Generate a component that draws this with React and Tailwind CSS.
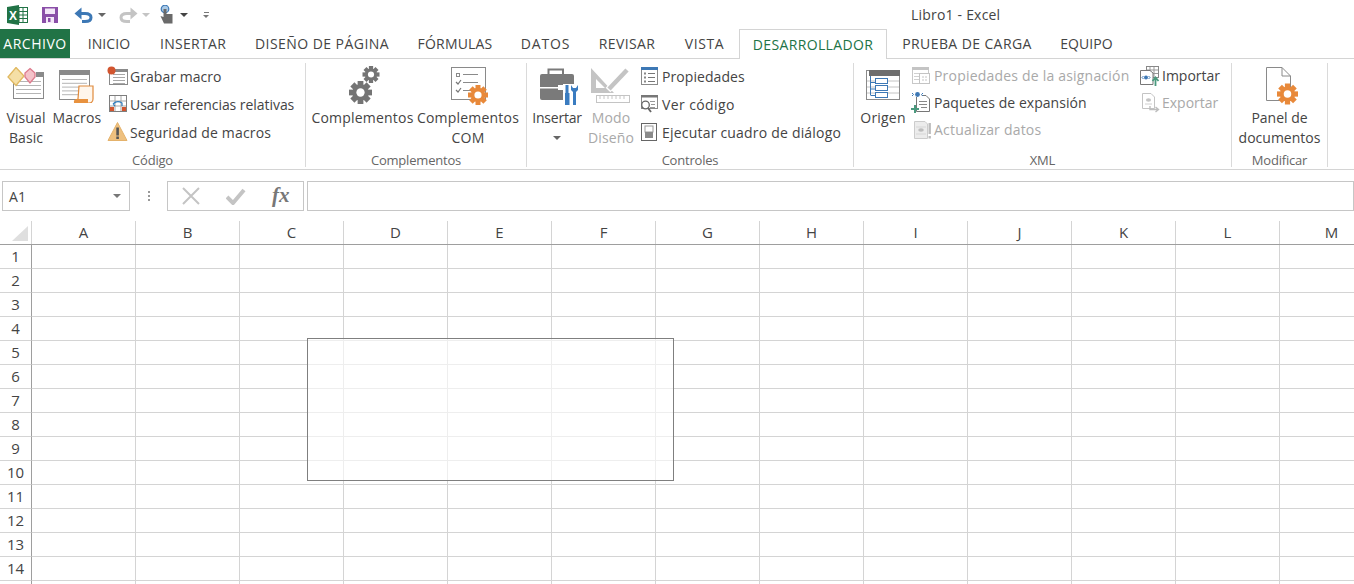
import React from 'react';

const TABS = [
  ['INICIO', 'w-[72px] tracking-[0.1px]'],
  ['INSERTAR', 'w-[96px] tracking-[0.3px]'],
  ['DISEÑO DE PÁGINA', 'w-[162px] tracking-[0.45px]'],
  ['FÓRMULAS', 'w-[104px] tracking-[0.17px]'],
  ['DATOS', 'w-[77px] tracking-[0.8px]'],
  ['REVISAR', 'w-[86px] tracking-[0.4px]'],
  ['VISTA', 'w-[69px] tracking-[0.6px]'],
];
const TABS_AFTER = [
  ['PRUEBA DE CARGA', 'w-[158px] tracking-[0.4px]'],
  ['EQUIPO', 'w-[81px] tracking-[0.1px]'],
];
const COLUMNS = ['A', 'B', 'C', 'D', 'E', 'F', 'G', 'H', 'I', 'J', 'K', 'L', 'M'];
const ROWS = [1, 2, 3, 4, 5, 6, 7, 8, 9, 10, 11, 12, 13, 14, 15];

const Gear = ({ cx, cy, r, color }) => (
  <g fill={color}>
    {[0, 45, 90, 135].map((a) => (
      <rect key={a} x={cx - r * 0.25} y={cy - r} width={r * 0.5} height={r * 2} transform={`rotate(${a} ${cx} ${cy})`} />
    ))}
    <circle cx={cx} cy={cy} r={r * 0.72} />
    <circle cx={cx} cy={cy} r={r * 0.36} fill="#fff" />
  </g>
);

const Lines = ({ x, y, w, n, step, color = '#9a9a9a' }) => (
  <g stroke={color} strokeWidth="1">
    {Array.from({ length: n }).map((_, i) => (
      <line key={i} x1={x} x2={x + w} y1={y + i * step + 0.5} y2={y + i * step + 0.5} />
    ))}
  </g>
);

const Table = ({ x, y, w, h, color = '#8a8a8a', rows = 4 }) => (
  <g>
    <rect x={x + 0.5} y={y + 0.5} width={w - 1} height={h - 1} fill="#fff" stroke={color} />
    <rect x={x} y={y} width={w} height={5} fill={color} />
    <Lines x={x + 3} y={y + 9} w={w - 6} n={rows} step={(h - 11) / rows} color="#b5b5b5" />
  </g>
);

const VisualBasicIcon = () => (
  <svg width="38" height="36" viewBox="0 0 38 36" className="block">
    <Table x={6} y={5} w={31} h={27} />
    <rect x={5} y={4} width={24} height={7} fill="#fff" />
    <path d="M9 0.5 L17 9 L9 18.5 L1 10 Z" fill="#f5dfa6" stroke="#e0b860" strokeWidth="1.3" />
    <path d="M23 1.5 L28 6 L28 10 L23 16 L18 10 L18 6 Z" fill="#f4c2c9" stroke="#dd7b8d" strokeWidth="1.3" />
  </svg>
);

const MacrosIcon = () => (
  <svg width="38" height="36" viewBox="0 0 38 36" className="block">
    <Table x={1} y={3} w={31} h={30} rows={5} />
    <path d="M21 19 H35 V32 Q35 36 31 36 H18 Q16 33 20 32 Z" fill="#fff6ec" stroke="#e08a3c" strokeWidth="1.2" />
    <path d="M16 36 Q15 32 20 32 H30 V36 Z" fill="#e8923f" />
  </svg>
);

const RecordIcon = () => (
  <svg width="21" height="20" viewBox="0 0 21 20" className="block">
    <rect x="2.5" y="3.5" width="18" height="15" fill="#fff" stroke="#8a8a8a" />
    <rect x="2" y="3" width="19" height="3" fill="#8a8a8a" />
    <Lines x={6} y={8} w={12} n={4} step={3} color="#a8a8a8" />
    <circle cx="4.5" cy="4.5" r="4" fill="#d2552f" />
  </svg>
);

const RelativeIcon = () => (
  <svg width="21" height="20" viewBox="0 0 21 20" className="block">
    <rect x="2.5" y="1.5" width="17" height="16" fill="#fff" stroke="#7e7e7e" />
    <path d="M8 2V17M14 2V17M3 7H19M3 12H19" stroke="#a8a8a8" />
    <path d="M6 10 Q10 6 15 9 L15 12 M6 10 L9 8 M6 10 L8 12" fill="none" stroke="#2f7dbe" strokeWidth="1.2" />
    <rect x="3" y="13" width="4" height="4" fill="#d2552f" />
    <rect x="15" y="13" width="4" height="4" fill="#d2552f" />
  </svg>
);

const WarningIcon = () => (
  <svg width="21" height="20" viewBox="0 0 21 20" className="block">
    <path d="M10.5 0.5 L20 18.5 H1 Z" fill="#eec07f" stroke="#e4b26b" strokeLinejoin="round" />
    <rect x="9.3" y="5.5" width="2.6" height="8" fill="#555" />
    <rect x="9.3" y="14.5" width="2.6" height="2.5" fill="#555" />
  </svg>
);

const AddInsIcon = () => (
  <svg width="34" height="40" viewBox="0 0 34 40" className="block">
    <Gear cx={14.5} cy={27.5} r={11.5} color="#747474" />
    <Gear cx={25} cy={9.5} r={8.5} color="#747474" />
  </svg>
);

const ComIcon = () => (
  <svg width="42" height="40" viewBox="0 0 42 40" className="block">
    <rect x="4.5" y="2.5" width="34" height="32" fill="#fff" stroke="#8a8a8a" />
    <rect x="9.5" y="8.5" width="3" height="3" fill="none" stroke="#8a8a8a" />
    <path d="M16 9.5H31M16 17.5H31M16 25.5H25" stroke="#8a8a8a" />
    <path d="M9 17 L11 19 L14 15M9 25 L11 27 L14 23" fill="none" stroke="#777" strokeWidth="1.2" />
    <Gear cx={31} cy={30} r={10} color="#e8893a" />
  </svg>
);

const InsertIcon = () => (
  <svg width="44" height="39" viewBox="0 0 44 39" className="block">
    <path d="M13.5 8 V3.5 H28 V8" fill="none" stroke="#7a7a7a" strokeWidth="2" />
    <rect x="5" y="8" width="34" height="26" rx="2" fill="#7a7a7a" />
    <rect x="5" y="21" width="20" height="1.5" fill="#fff" />
    <rect x="23" y="19" width="5" height="5" fill="#fff" />
    <rect x="28" y="18" width="16" height="21" fill="#fff" />
    <path d="M30.5 19 H33.5 V27 H34.5 V39 H30 V27 H30.5 Z" fill="#3a7cc0" />
    <path d="M36 19 V24 L38 26 V39 H41 V26 L43 24 V19 L41 22 H38 Z" fill="#3a7cc0" />
  </svg>
);

const DesignIcon = () => (
  <svg width="42" height="38" viewBox="0 0 42 38" className="block">
    <path d="M1 2 L24 27 H1 Z M6 13 V22 H15 Z" fill="#c4c4c4" fillRule="evenodd" />
    <path d="M18 24 L37 4" stroke="#fff" strokeWidth="6.5" />
    <path d="M19 23 L37 4" stroke="#c4c4c4" strokeWidth="4.5" />
    <rect x="6.5" y="29.5" width="33" height="7" fill="#fff" stroke="#c4c4c4" />
    <path d="M10 30V33M14 30V33M18 30V33M22 30V33M26 30V33M30 30V33M34 30V33" stroke="#c4c4c4" />
  </svg>
);

const PropertiesIcon = () => (
  <svg width="21" height="20" viewBox="-1 0 21 20" className="block">
    <rect x="1.5" y="1.5" width="16" height="17" fill="#fff" stroke="#8a8a8a" />
    <rect x="1" y="1" width="17" height="3" fill="#3d78b5" />
    <path d="M8 7.5H15M8 11.5H15M8 15.5H15" stroke="#777" />
    <rect x="4" y="6.5" width="2" height="2" fill="#888" />
    <rect x="4" y="10.5" width="2" height="2" fill="#888" />
    <rect x="4" y="14.5" width="2" height="2" fill="#888" />
  </svg>
);

const ViewCodeIcon = () => (
  <svg width="21" height="20" viewBox="-1 0 21 20" className="block">
    <rect x="1.5" y="1.5" width="16" height="13" fill="#fff" stroke="#8a8a8a" />
    <rect x="1" y="1" width="17" height="2.5" fill="#777" />
    <path d="M10 7.5H15M11 10.5H15M10 13.5H15" stroke="#999" />
    <circle cx="5.5" cy="11" r="3.8" fill="#fff" stroke="#666" strokeWidth="1.3" />
    <path d="M8 14 L11 18" stroke="#666" strokeWidth="1.8" />
  </svg>
);

const DialogIcon = () => (
  <svg width="21" height="20" viewBox="-1 0 21 20" className="block">
    <rect x="1.5" y="1.5" width="15" height="17" fill="#fff" stroke="#666" />
    <rect x="5" y="4" width="8" height="6" fill="#fff" stroke="#999" />
    <rect x="5" y="10" width="8" height="6" fill="#8a8a8a" />
  </svg>
);

const SourceIcon = () => (
  <svg width="40" height="36" viewBox="-2 1 40 36" className="block">
    <rect x="1.5" y="4.5" width="33" height="29" fill="#fff" stroke="#8a8a8a" />
    <rect x="4" y="4" width="31" height="6" fill="#6e6e6e" />
    <path d="M2 15H10M2 21H10M2 27H10M23 15H34M23 21H34M23 27H34" stroke="#c4c4c4" />
    <path d="M5.5 10 V29 M5.5 16.5 H11 M5.5 23 H11 M5.5 29.5 H11" fill="none" stroke="#3d78b5" />
    <rect x="10.5" y="12.5" width="12" height="5" fill="#fff" stroke="#3d78b5" />
    <rect x="10.5" y="19.5" width="12" height="5" fill="#fff" stroke="#3d78b5" />
    <rect x="10.5" y="26.5" width="12" height="5" fill="#fff" stroke="#3d78b5" />
  </svg>
);

const MapPropsIcon = () => (
  <svg width="22" height="20" viewBox="0 0 22 20" className="block">
    <rect x="1.5" y="1.5" width="16" height="16" fill="#fff" stroke="#c8c8c8" />
    <rect x="1" y="1" width="17" height="3" fill="#c4c4c4" />
    <path d="M3 7.5H8M3 10.5H8M3 13.5H8" stroke="#d0d0d0" />
    <rect x="8.5" y="7.5" width="10" height="10" fill="#fff" stroke="#c4c4c4" />
    <path d="M11 11H13M14 11H16M11 14H13M14 14H16" stroke="#c4c4c4" />
  </svg>
);

const PacksIcon = () => (
  <svg width="22" height="22" viewBox="0 0 22 22" className="block">
    <path d="M5.5 3.5 H15 L18.5 7 V19.5 H5.5 Z" fill="#fff" stroke="#777" />
    <path d="M8 9.5H16M8 12.5H16M10 15.5H16" stroke="#888" />
    <path d="M0.5 2.5 L3 0.5 H9 L12 2.5 L9 5 H3 Z" fill="#fff" />
    <circle cx="6.5" cy="2.5" r="2.4" fill="#3d78b5" />
    <path d="M2.5 2.5 L1 1M2.5 2.5 L1 4M10.5 2.5 L12 1M10.5 2.5 L12 4" stroke="#3d78b5" />
    <path d="M0 17H8M4 13V21" stroke="#4a9a7e" strokeWidth="2" />
  </svg>
);

const RefreshIcon = () => (
  <svg width="22" height="20" viewBox="-2 0 22 20" className="block">
    <path d="M1.5 1.5 H12 L14.5 4 V18.5 H1.5 Z" fill="#ececec" stroke="#cccccc" />
    <ellipse cx="8" cy="10" rx="2.8" ry="1.8" fill="#bdbdbd" />
    <path d="M3 7H13M3 14H13" stroke="#d6d6d6" />
    <rect x="15.5" y="3" width="2.4" height="11" fill="#bdbdbd" />
    <rect x="15.5" y="16" width="2.4" height="2.5" fill="#bdbdbd" />
  </svg>
);

const ImportIcon = () => (
  <svg width="22" height="22" viewBox="0 0 22 22" className="block">
    <rect x="7.5" y="1.5" width="12" height="11" fill="#fff" stroke="#888" />
    <path d="M11 2V12M15 2V12M8 5H19M8 8.5H19" stroke="#999" />
    <path d="M1.5 5.5 H11 L14 8 V19.5 H1.5 Z" fill="#fff" stroke="#777" />
    <circle cx="7" cy="12.5" r="2" fill="#3d78b5" />
    <path d="M3 12.5 L4.5 11M3 12.5 L4.5 14M11 12.5 L9.5 11M11 12.5 L9.5 14" stroke="#3d78b5" />
    <path d="M16.5 21 V13 M13.5 16 L16.5 12.5 L19.5 16" fill="none" stroke="#4a9a7e" strokeWidth="1.8" />
  </svg>
);

const ExportIcon = () => (
  <svg width="22" height="22" viewBox="0 0 22 22" className="block">
    <path d="M3.5 1.5 H12 L15.5 5 V16.5 H3.5 Z" fill="#fff" stroke="#c4c4c4" />
    <ellipse cx="9.5" cy="8" rx="2.6" ry="1.8" fill="#c4c4c4" />
    <path d="M6 12H13" stroke="#d0d0d0" />
    <path d="M11 14 V17.5 H19 M16.5 15 L19.5 17.5 L16.5 20" fill="none" stroke="#bdbdbd" strokeWidth="1.4" />
  </svg>
);

const PanelIcon = () => (
  <svg width="36" height="40" viewBox="0 0 36 40" className="block">
    <path d="M4.5 2.5 H20 L28.5 11 V35.5 H4.5 Z" fill="#fff" stroke="#8a8a8a" />
    <path d="M20 2.5 V11 H28.5" fill="none" stroke="#8a8a8a" />
    <Gear cx={25.5} cy={29} r={10.5} color="#e8893a" />
  </svg>
);

const ExcelLogo = () => (
  <svg width="21" height="20" viewBox="0 0 21 20" className="block">
    <rect x="8" y="2.5" width="12.5" height="15" fill="#fff" stroke="#217346" />
    <path d="M12 3V17M16 3V17M8 6.5H20M8 10H20M8 13.5H20" stroke="#217346" />
    <path d="M0 2 L12 0 V20 L0 18 Z" fill="#217346" />
    <text x="6" y="14.5" textAnchor="middle" fontSize="12" fontWeight="700" fill="#fff" fontFamily="'Liberation Sans', sans-serif">X</text>
  </svg>
);

const SaveIcon = () => (
  <svg width="16" height="16" viewBox="0 0 16 16" className="block">
    <path d="M0 0 H16 V16 H0 Z" fill="#8a4fa8" />
    <rect x="3" y="1.5" width="10" height="5.5" fill="#f3e7f8" />
    <rect x="4" y="10" width="8" height="6" fill="#f3e7f8" />
    <rect x="6" y="11" width="2.5" height="4" fill="#8a4fa8" />
  </svg>
);

const UndoIcon = ({ color }) => (
  <svg width="19" height="16" viewBox="0 0 19 16" className="block">
    <path d="M4 6.5 H11 Q17 6.5 17 10.5 Q17 14.5 11 14.5 H8" fill="none" stroke={color} strokeWidth="3" />
    <path d="M7.5 0.5 L0.5 6.5 L7.5 12.5 Z" fill={color} />
  </svg>
);

const TouchIcon = () => (
  <svg width="14" height="19" viewBox="0 0 14 19" className="block">
    <circle cx="5" cy="4" r="3.8" fill="#a9c9e6" stroke="#3d78b5" strokeWidth="1.2" />
    <path d="M3.5 4 H6.5 V9 H12.5 V18.5 H4 L0.5 11 L3.5 12 Z" fill="#6a6a6a" />
  </svg>
);

const Caret = ({ color = '#666', className = '' }) => (
  <span className={`inline-block border-x-[4px] border-t-[4px] border-x-transparent ${className}`} style={{ borderTopColor: color }} />
);

function LargeButton({ icon, lines, width, disabled, caret, track = '' }) {
  return (
    <div className={`flex flex-col items-center shrink-0 ${width} ${track} ${disabled ? 'text-[#a9a9a9]' : 'text-[#444444]'}`}>
      <div className="h-[46px] flex items-center justify-center">{icon}</div>
      {lines.map((l) => (
        <div key={l} className="leading-5 whitespace-nowrap">{l}</div>
      ))}
      {caret && <Caret className="mt-2" />}
    </div>
  );
}

function SmallRow({ icon, label, disabled, height = 'h-7', track = '' }) {
  return (
    <div className={`flex items-center whitespace-nowrap ${height} ${disabled ? 'text-[#a9a9a9]' : 'text-[#444444]'}`}>
      <div className="w-[23px] shrink-0">{icon}</div>
      <span className={track}>{label}</span>
    </div>
  );
}

function Group({ label, width, children }) {
  return (
    <div className={`flex shrink-0 h-[106px] ${width}`}>
      <div className="flex flex-col flex-1 min-w-0">
        <div className="flex flex-1 min-h-0">{children}</div>
        <div className="h-[18px] leading-[20px] text-center text-[13px] tracking-[-0.2px] text-[#666666]">{label}</div>
      </div>
      <div className="w-px my-px bg-[#dadada]" />
    </div>
  );
}

export default function App() {
  return (
    <div className="relative w-[1354px] h-[584px] overflow-hidden bg-white text-[14px] tracking-[0.1px] text-[#444444] font-['Open_Sans','Liberation_Sans',sans-serif]">
      {/* title bar */}
      <div className="flex items-center h-[29px]">
        <div className="flex items-center w-[911px] pl-[7px] shrink-0">
          <ExcelLogo />
          <div className="ml-[14px]"><SaveIcon /></div>
          <div className="ml-[16px]"><UndoIcon color="#3d78b5" /></div>
          <Caret className="ml-[5px]" />
          <div className="ml-[13px] -scale-x-100"><UndoIcon color="#c4c4c4" /></div>
          <Caret color="#c4c4c4" className="ml-[4px]" />
          <div className="ml-[10px]"><TouchIcon /></div>
          <Caret color="#444" className="ml-[6px]" />
          <div className="ml-[15px] flex flex-col items-center gap-[2px]">
            <div className="w-[5px] h-px bg-[#777]" />
            <span className="inline-block border-x-[3px] border-t-[3px] border-x-transparent border-t-[#777]" />
          </div>
        </div>
        <span className="tracking-[0.2px]">Libro1 - Excel</span>
      </div>

      {/* tabs */}
      <div className="flex h-[30px] border-b border-[#d4d4d4]">
        <div className="w-[70px] h-[29px] shrink-0 bg-[#217346] text-white tracking-[0.5px] flex items-center justify-center">ARCHIVO</div>
        <div className="w-[3px] shrink-0" />
        {TABS.map(([t, w]) => (
          <div key={t} className={`${w} shrink-0 h-[29px] flex items-center justify-center whitespace-nowrap`}>{t}</div>
        ))}
        <div className="w-[148px] h-[30px] shrink-0 bg-white border-x border-t border-[#d4d4d4] text-[#217346] tracking-[0.35px] flex items-center justify-center">DESARROLLADOR</div>
        <div className="w-[1px] shrink-0" />
        {TABS_AFTER.map(([t, w]) => (
          <div key={t} className={`${w} shrink-0 h-[29px] flex items-center justify-center whitespace-nowrap`}>{t}</div>
        ))}
      </div>

      {/* ribbon */}
      <div className="flex h-[111px] pt-[3px] border-b border-[#d4d4d4]">
        <Group label="Código" width="w-[306px]">
          <LargeButton icon={<VisualBasicIcon />} lines={['Visual', 'Basic']} width="w-[52px]" />
          <LargeButton icon={<MacrosIcon />} lines={['Macros']} width="w-[50px]" track="tracking-[0.15px]" />
          <div className="ml-[5px]">
            <SmallRow icon={<RecordIcon />} label="Grabar macro" track="tracking-[0.05px]" />
            <SmallRow icon={<RelativeIcon />} label="Usar referencias relativas" track="tracking-[-0.05px]" />
            <SmallRow icon={<WarningIcon />} label="Seguridad de macros" track="tracking-[0.17px]" />
          </div>
        </Group>
        <Group label="Complementos" width="w-[221px]">
          <LargeButton icon={<AddInsIcon />} lines={['Complementos']} width="w-[105px] ml-[4px]" track="tracking-[0.2px]" />
          <LargeButton icon={<ComIcon />} lines={['Complementos', 'COM']} width="w-[106px]" track="tracking-[0.2px]" />
        </Group>
        <Group label="Controles" width="w-[327px]">
          <LargeButton icon={<InsertIcon />} lines={['Insertar']} width="w-[50px] ml-[5px]" track="tracking-[-0.2px]" caret />
          <LargeButton icon={<DesignIcon />} lines={['Modo', 'Diseño']} width="w-[46px] ml-[6px]" disabled />
          <div className="ml-[5px]">
            <SmallRow icon={<PropertiesIcon />} label="Propiedades" track="tracking-[0.07px]" />
            <SmallRow icon={<ViewCodeIcon />} label="Ver código" track="tracking-[0.4px]" />
            <SmallRow icon={<DialogIcon />} label="Ejecutar cuadro de diálogo" track="tracking-[0.2px]" />
          </div>
        </Group>
        <Group label="XML" width="w-[378px]">
          <LargeButton icon={<SourceIcon />} lines={['Origen']} width="w-[46px] ml-[6px]" track="tracking-[0.2px]" />
          <div className="ml-[5px] w-[228px] shrink-0">
            <SmallRow icon={<MapPropsIcon />} label="Propiedades de la asignación" height="h-[27px]" track="tracking-[0.2px]" disabled />
            <SmallRow icon={<PacksIcon />} label="Paquetes de expansión" height="h-[27px]" track="tracking-[0.04px]" />
            <SmallRow icon={<RefreshIcon />} label="Actualizar datos" height="h-[27px]" track="tracking-[0.2px]" disabled />
          </div>
          <div>
            <SmallRow icon={<ImportIcon />} label="Importar" height="h-[27px]" track="tracking-[0px]" />
            <SmallRow icon={<ExportIcon />} label="Exportar" height="h-[27px]" track="tracking-[0px]" disabled />
          </div>
        </Group>
        <Group label="Modificar" width="w-[96px]">
          <LargeButton icon={<PanelIcon />} lines={['Panel de', 'documentos']} width="w-full" track="tracking-[0px]" />
        </Group>
      </div>

      {/* formula bar */}
      <div className="flex items-stretch h-[30px] mt-[11px] pl-[2px]">
        <div className="w-[128px] shrink-0 border border-[#c6c6c6] flex items-center justify-between pl-[6px] pr-[8px]">
          <span>A1</span>
          <Caret color="#777" />
        </div>
        <div className="w-[37px] shrink-0 flex flex-col items-center justify-center gap-[2px]">
          <div className="w-[2px] h-[2px] bg-[#999]" />
          <div className="w-[2px] h-[2px] bg-[#999]" />
          <div className="w-[2px] h-[2px] bg-[#999]" />
        </div>
        <div className="w-[137px] shrink-0 border border-[#c6c6c6] flex items-center pl-[14px]">
          <svg width="18" height="18" viewBox="0 0 18 18" className="block">
            <path d="M1 1 L17 17M17 1 L1 17" stroke="#c4c4c4" strokeWidth="2" />
          </svg>
          <svg width="20" height="18" viewBox="0 0 20 18" className="block ml-[26px]">
            <path d="M1 10 L7 16 L18 3" fill="none" stroke="#c4c4c4" strokeWidth="4" />
          </svg>
          <span className="ml-[26px] text-[21px] italic font-bold text-[#777777] font-['Liberation_Serif',serif] tracking-normal">fx</span>
        </div>
        <div className="flex-1 ml-[3px] border border-[#c6c6c6]" />
      </div>

      {/* sheet */}
      <div className="mt-[10px] text-[15px] tracking-normal">
        <div className="flex h-[24px] border-b border-[#9e9e9e]">
          <div className="w-[32px] shrink-0 border-r border-[#d4d4d4] pl-[12px] pt-[5px]">
            <div className="w-0 h-0 border-l-[16px] border-b-[15px] border-l-transparent border-b-[#dfdfdf]" />
          </div>
          {COLUMNS.map((c) => (
            <div key={c} className="w-[104px] shrink-0 border-r border-[#d4d4d4] flex items-center justify-center">{c}</div>
          ))}
        </div>
        {ROWS.map((r) => (
          <div key={r} className="flex h-[24px]">
            <div className="w-[32px] shrink-0 border-r border-[#9e9e9e] border-b border-b-[#d4d4d4] flex items-center justify-center">{r < 15 && r}</div>
            {COLUMNS.map((c) => (
              <div key={c} className="w-[104px] shrink-0 border-r border-b border-[#d4d4d4]" />
            ))}
          </div>
        ))}
      </div>

      {/* floating box over the sheet */}
      <div className="absolute left-[307px] top-[338px] w-[367px] h-[143px] border border-[#7f7f7f] bg-white/60" />
    </div>
  );
}
